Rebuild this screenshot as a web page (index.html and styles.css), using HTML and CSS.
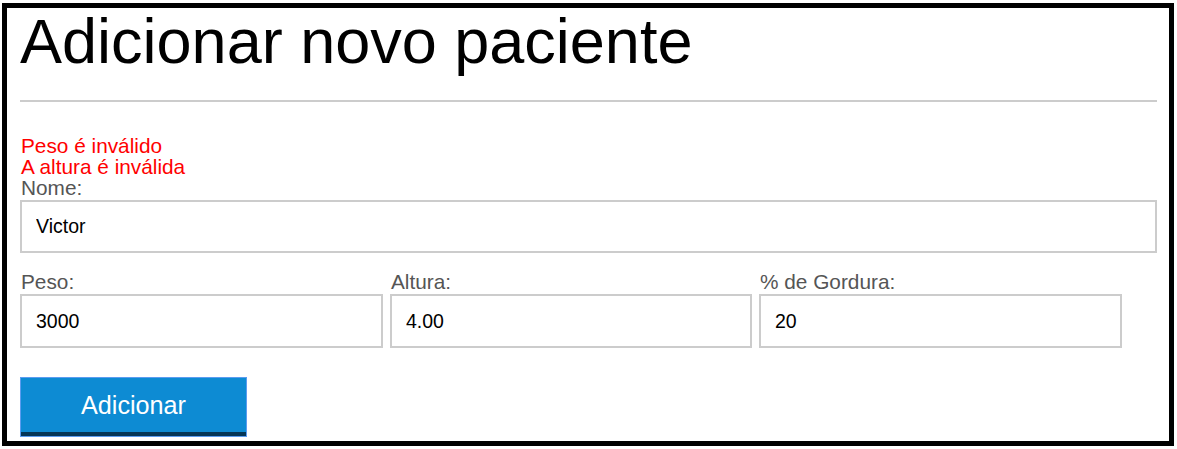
FILE: index.html
```html
<!DOCTYPE html>
<html lang="pt">
<head>
<meta charset="utf-8">
<title>Adicionar novo paciente</title>
<link rel="stylesheet" href="styles.css">
</head>
<body>
<div class="frame">
  <h1 class="title">Adicionar novo paciente</h1>
  <hr class="divider">
  <ul class="errors">
    <li>Peso é inválido</li>
    <li>A altura é inválida</li>
  </ul>
  <form class="form">
    <div class="field">
      <label class="label" for="nome">Nome:</label>
      <input class="input" id="nome" type="text" value="Victor">
    </div>
    <div class="row">
      <div class="field">
        <label class="label" for="peso">Peso:</label>
        <input class="input" id="peso" type="text" value="3000">
      </div>
      <div class="field">
        <label class="label" for="altura">Altura:</label>
        <input class="input" id="altura" type="text" value="4.00">
      </div>
      <div class="field">
        <label class="label" for="gordura">% de Gordura:</label>
        <input class="input" id="gordura" type="text" value="20">
      </div>
    </div>
    <button class="button" type="button">Adicionar</button>
  </form>
</div>
</body>
</html>
```

FILE: styles.css
```css
* { box-sizing: border-box; }
html, body { margin: 0; padding: 0; background: #fff; }
body { font-family: "Liberation Sans", Arial, sans-serif; }

.frame {
  margin: 3px 0 0 2px;
  width: 1172px;
  height: 443px;
  border: 5px solid #000;
  padding: 0 12px 0 13px;
  overflow: hidden;
}

.title {
  margin: 5px 0 0;
  font-size: 63px;
  line-height: 56px;
  font-weight: normal;
  color: #000;
}

.divider {
  margin: 31px 0 0;
  border: 0;
  height: 2px;
  background: #ccc;
}

.errors {
  list-style: none;
  margin: 33px 0 0;
  padding: 0 0 0 1px;
  color: #f00;
  font-size: 20.8px;
  line-height: 21px;
}

.form { display: flex; flex-direction: column; }

.field { display: flex; flex-direction: column; }

.label {
  padding-left: 1px;
  font-size: 20.8px;
  line-height: 21px;
  color: #555;
  margin-bottom: 2px;
}

.input {
  width: 100%;
  height: 53px;
  border: 2px solid #ccc;
  padding: 0 14px;
  font-family: "Liberation Sans", Arial, sans-serif;
  font-size: 19.5px;
  color: #000;
  background: #fff;
  outline: none;
}

.row {
  display: grid;
  grid-template-columns: 363px 362px 363px;
  column-gap: 7px;
  margin-top: 18px;
}
.row .input { height: 54px; }

.button {
  margin-top: 29px;
  width: 227px;
  height: 60px;
  background: #0d8bd3;
  border: 1px solid #5b9cf0;
  box-shadow: inset 0 -4px 0 #053656;
  color: #fff;
  font-family: "Liberation Sans", Arial, sans-serif;
  font-size: 25.2px;
  padding: 0 0 4px;
}
```
